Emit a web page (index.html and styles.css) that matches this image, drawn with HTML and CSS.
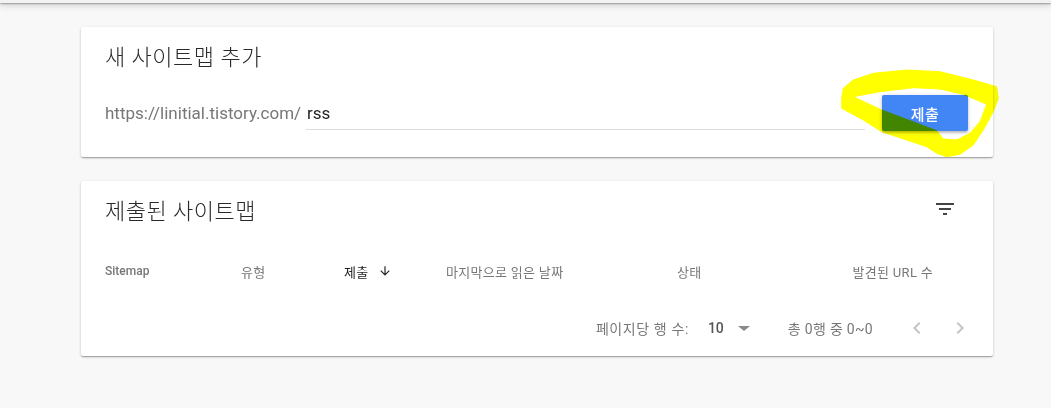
FILE: index.html
```html
<!DOCTYPE html>
<html lang="ko">
<head>
<meta charset="utf-8">
<title>Sitemaps</title>
<link rel="stylesheet" href="styles.css">
</head>
<body>
<div class="topbar"></div>
<main class="content">
  <section class="card add-card">
    <h2 class="card-title">새 사이트맵 추가</h2>
    <div class="add-row">
      <span class="prefix">https://linitial.tistory.com/</span>
      <div class="field"><span class="field-value">rss</span></div>
      <button class="submit">제출</button>
    </div>
  </section>

  <section class="card list-card">
    <div class="list-head">
      <h2 class="card-title">제출된 사이트맵</h2>
      <svg class="filter-icon" viewBox="0 0 24 24" width="24" height="24"><path d="M10 18h4v-2h-4v2zM3 6v2h18V6H3zm3 7h12v-2H6v2z" fill="#444"/></svg>
    </div>
    <div class="table-head">
      <span class="th th-bold">Sitemap</span>
      <span class="th th-ko">유형</span>
      <span class="th th-ko th-active">제출
        <svg class="sort-icon" viewBox="0 0 24 24" width="14" height="14"><path d="M20 12l-1.41-1.41L13 16.17V4h-2v12.17l-5.58-5.59L4 12l8 8 8-8z" fill="#222"/></svg>
      </span>
      <span class="th th-ko">마지막으로 읽은 날짜</span>
      <span class="th th-ko">상태</span>
      <span class="th th-ko th-right">발견된 URL 수</span>
    </div>
    <div class="pager">
      <span class="pager-label">페이지당 행 수:</span>
      <span class="pager-size">10</span>
      <span class="drop-arrow"></span>
      <span class="pager-range">총 0행 중 0~0</span>
      <svg class="chev chev-prev" viewBox="0 0 24 24" width="24" height="24"><path d="M15.41 7.41L14 6l-6 6 6 6 1.41-1.41L10.83 12z" fill="#c4c4c4"/></svg>
      <svg class="chev chev-next" viewBox="0 0 24 24" width="24" height="24"><path d="M10 6L8.59 7.41 13.17 12l-4.58 4.59L10 18l6-6z" fill="#c4c4c4"/></svg>
    </div>
  </section>
</main>

<svg class="annotation" viewBox="0 0 1051 408" width="1051" height="408">
  <path fill="#ffff00" fill-rule="evenodd" stroke="#ffff00" stroke-width="1" stroke-linejoin="round"
    d="M841.7,98.3 L843.3,88.3 L853.3,80 L873.3,73.3 L906.7,70 L940,71.7 L973.3,80 L996.7,86.7 L998.3,98.3 L993.3,111.7 L983.3,130 L973.3,145 L960,154.3 L946.7,156.7 L936.7,153.3 L926.7,146.7 L881.7,131.7 L863.3,120 L841.7,108.3 Z
       M853.3,96.7 L880,91.7 L913.3,87.7 L940,89 L963.3,94.3 L986.7,104.3 L980,121.7 L970,133.3 L956.7,140 L943.3,139 L936.7,130.7 L881.7,110 Z"/>
</svg>
</body>
</html>
```

FILE: styles.css
```css
* { box-sizing: border-box; }

html, body {
  margin: 0;
  padding: 0;
}

body {
  background: #f8f8f8;
  font-family: Roboto, "Noto Sans CJK KR", sans-serif;
  color: #212121;
  width: 1051px;
  height: 408px;
  overflow: hidden;
  position: relative;
}

.topbar {
  height: 3px;
  background: #f2f2f2;
  box-shadow: 0 1px 2px rgba(0,0,0,0.35), 0 2px 7px rgba(0,0,0,0.25);
  position: relative;
  z-index: 2;
}

.content {
  padding: 24px 0 0 81px;
  display: flex;
  flex-direction: column;
  gap: 24px;
}

.card {
  width: 912px;
  background: #fff;
  border-radius: 2px;
  box-shadow: 0 1px 3px rgba(0,0,0,0.2), 0 1px 1px rgba(0,0,0,0.14), 0 2px 1px -1px rgba(0,0,0,0.12);
}

.card-title {
  margin: 0;
  font-size: 22px;
  line-height: 30px;
  font-weight: 300;
  letter-spacing: 0.5px;
  color: #2a2a2a;
}

.add-card {
  height: 130px;
  padding: 16px 25px 0 24px;
}

.add-row {
  margin-top: 22px;
  height: 36px;
  display: flex;
  align-items: center;
}

.prefix {
  font-size: 17px;
  color: #777;
  margin-right: 5px;
  line-height: 20px;
}

.field {
  flex: 1;
  height: 33px;
  border-bottom: 1px solid #dcdcdc;
  display: flex;
  align-items: center;
  margin-right: 17px;
  padding-top: 1px;
}

.field-value {
  font-size: 17px;
  color: #222;
  padding-left: 1px;
}

.submit {
  width: 86px;
  height: 36px;
  border: none;
  border-radius: 2px;
  background: #4285f4;
  color: #fff;
  font-family: Roboto, "Noto Sans CJK KR", sans-serif;
  font-size: 15px;
  font-weight: 500;
  letter-spacing: 0.5px;
  box-shadow: 0 2px 2px rgba(0,0,0,0.14), 0 1px 4px rgba(0,0,0,0.2);
  padding: 0;
}

.list-card {
  height: 175px;
}

.list-head {
  height: 62px;
  padding: 16px 36px 0 24px;
  display: flex;
  justify-content: space-between;
  align-items: flex-start;
}

.filter-icon {
  display: block;
}

.table-head {
  height: 56px;
  padding: 0 60px 0 24px;
  display: grid;
  grid-template-columns: 136px 103px 102px 231px 1fr auto;
  align-items: center;
  font-size: 12px;
  color: #777;
}

.th { white-space: nowrap; }
.th-ko {
  font-size: 13px;
  letter-spacing: 0.3px;
}
.th-bold { font-weight: 500; }
.th-active {
  color: #222;
  display: flex;
  align-items: center;
  gap: 9px;
}
.sort-icon { display: block; }
.th-right { text-align: right; }

.pager {
  height: 57px;
  display: flex;
  align-items: center;
  justify-content: flex-end;
  padding-right: 21px;
  font-size: 14px;
  letter-spacing: 0.6px;
  color: #777;
}

.pager-size {
  margin-left: 19px;
  color: #555;
  font-weight: 500;
  letter-spacing: 0;
}

.drop-arrow {
  width: 0;
  height: 0;
  margin-left: 14px;
  margin-top: 2px;
  border-left: 6px solid transparent;
  border-right: 6px solid transparent;
  border-top: 5px solid #8a8a8a;
}

.pager-range {
  margin-left: 38px;
  letter-spacing: 0.3px;
}

.chev { display: block; }
.chev-prev { margin-left: 32px; }
.chev-next { margin-left: 19px; }

.annotation {
  position: absolute;
  left: 0;
  top: 0;
  pointer-events: none;
  mix-blend-mode: multiply;
  z-index: 5;
}
```
